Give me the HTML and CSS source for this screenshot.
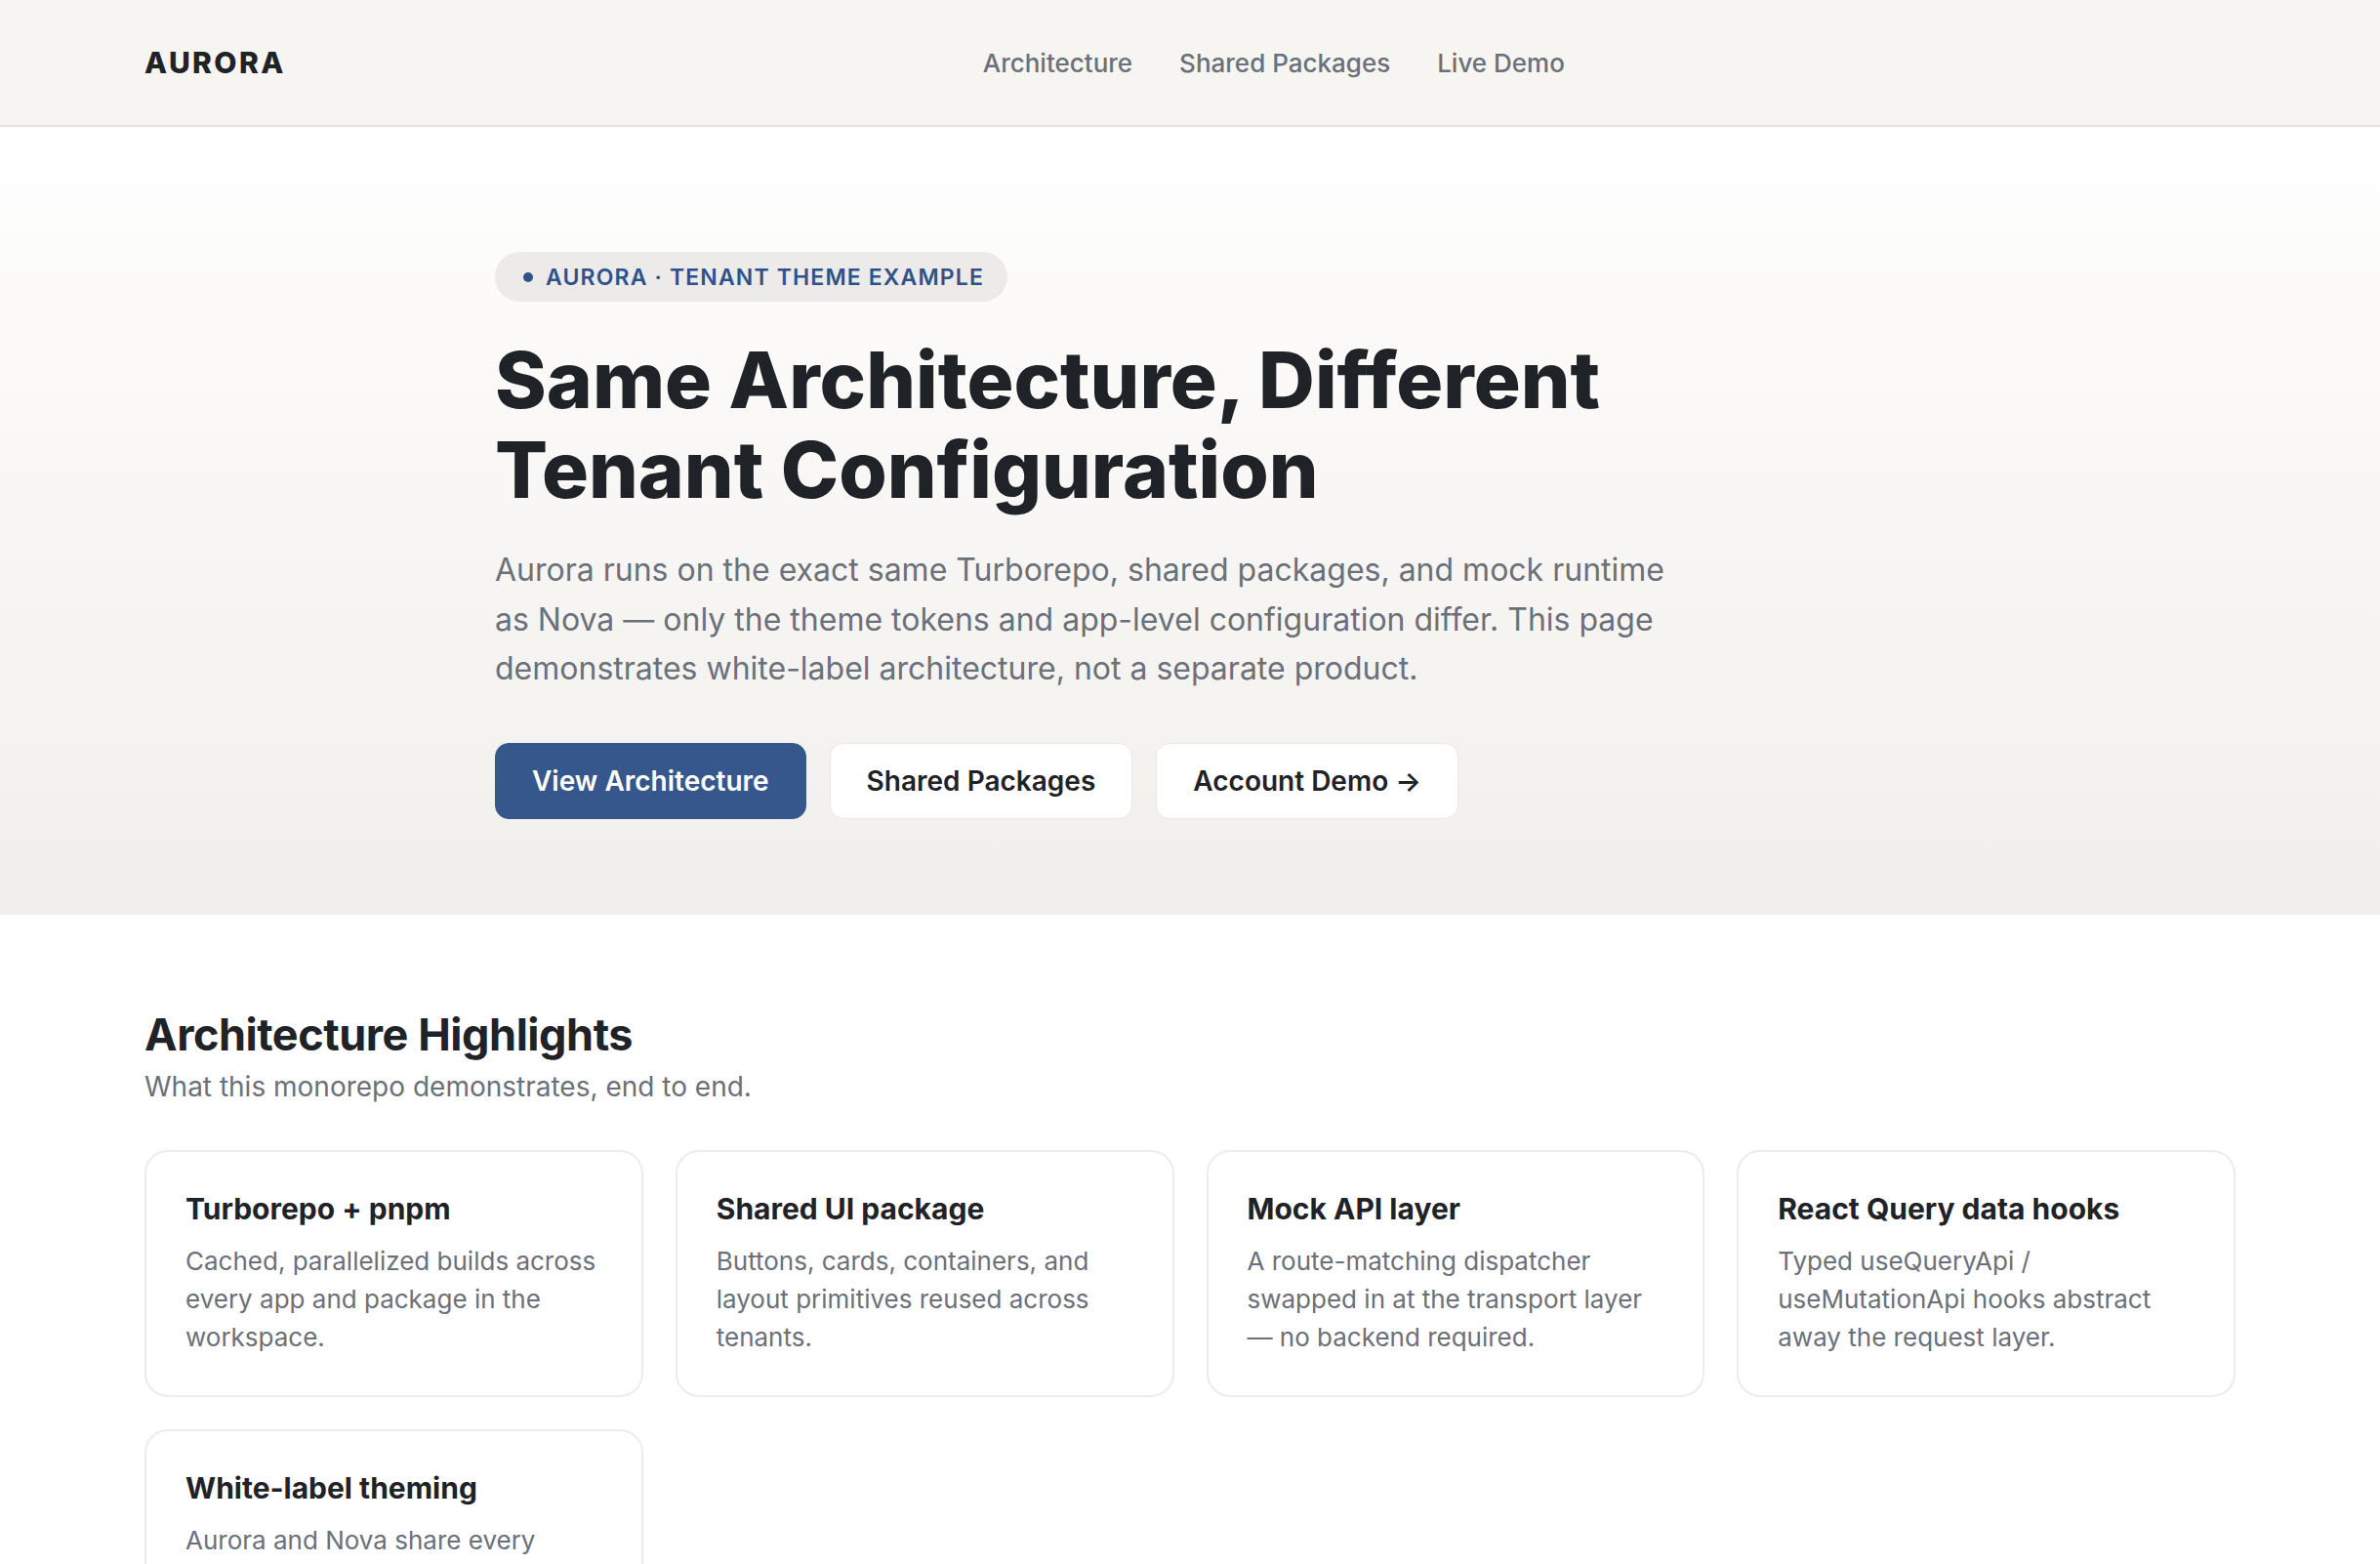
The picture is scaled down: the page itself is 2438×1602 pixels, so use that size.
FILE: index.html
```html
<!DOCTYPE html>
<html lang="en">
<head>
<meta charset="utf-8">
<title>Aurora — Tenant Theme Example</title>
<link rel="stylesheet" href="styles.css">
</head>
<body>
<header class="topbar">
  <div class="container topbar-inner">
    <a class="logo" href="#">AURORA</a>
    <nav class="nav">
      <a href="#">Architecture</a>
      <a href="#">Shared Packages</a>
      <a href="#">Live Demo</a>
    </nav>
  </div>
</header>

<section class="hero">
  <div class="hero-inner">
    <div class="badge"><span class="dot"></span>Aurora · Tenant Theme Example</div>
    <h1 class="hero-title">Same Architecture, Different Tenant Configuration</h1>
    <p class="hero-text">Aurora runs on the exact same Turborepo, shared packages, and mock runtime as Nova — only the theme tokens and app-level configuration differ. This page demonstrates white-label architecture, not a separate product.</p>
    <div class="actions">
      <a class="btn btn-primary" href="#">View Architecture</a>
      <a class="btn btn-secondary" href="#">Shared Packages</a>
      <a class="btn btn-secondary" href="#">Account Demo →</a>
    </div>
  </div>
</section>

<section class="highlights">
  <div class="container">
    <h2 class="section-title">Architecture Highlights</h2>
    <p class="section-sub">What this monorepo demonstrates, end to end.</p>
    <div class="cards">
      <div class="card">
        <h3 class="card-title">Turborepo + pnpm</h3>
        <p class="card-text">Cached, parallelized builds across every app and package in the workspace.</p>
      </div>
      <div class="card">
        <h3 class="card-title">Shared UI package</h3>
        <p class="card-text">Buttons, cards, containers, and layout primitives reused across tenants.</p>
      </div>
      <div class="card">
        <h3 class="card-title">Mock API layer</h3>
        <p class="card-text">A route-matching dispatcher swapped in at the transport layer — no backend required.</p>
      </div>
      <div class="card">
        <h3 class="card-title">React Query data hooks</h3>
        <p class="card-text">Typed useQueryApi / useMutationApi hooks abstract away the request layer.</p>
      </div>
      <div class="card">
        <h3 class="card-title">White-label theming</h3>
        <p class="card-text">Aurora and Nova share every component; only the theme tokens and app configuration change.</p>
      </div>
    </div>
  </div>
</section>
</body>
</html>
```

FILE: styles.css
```css
* { box-sizing: border-box; }

html, body {
  margin: 0;
  padding: 0;
}

body {
  font-family: Inter, "Noto Sans", "Liberation Sans", sans-serif;
  color: #1f2328;
  background: #ffffff;
}

a { text-decoration: none; color: inherit; }

.container {
  max-width: 2438px;
  padding: 0 148px;
  margin: 0 auto;
}

.topbar {
  background: #f6f5f2;
  border-bottom: 2px solid #e3e1dd;
}

.topbar-inner {
  height: 128px;
  display: flex;
  align-items: center;
}

.logo {
  font-size: 30px;
  font-weight: 800;
  letter-spacing: 0.08em;
  color: #1f2328;
}

.nav {
  margin-left: 714px;
  display: flex;
  gap: 48px;
}

.nav a {
  font-size: 26px;
  font-weight: 500;
  color: #6b7079;
}

.hero {
  background: linear-gradient(180deg, #ffffff 0%, #f9f8f6 40%, #f1efec 100%);
  padding: 128px 0 98px;
}

.hero-inner {
  max-width: 1424px;
  margin: 0 auto;
}

.badge {
  display: inline-flex;
  align-items: center;
  gap: 13px;
  height: 51px;
  padding: 0 24px 0 29px;
  border-radius: 999px;
  background: #ecebe9;
  color: #2f528a;
  font-size: 23px;
  font-weight: 600;
  text-transform: uppercase;
  letter-spacing: 0.05em;
}

.dot {
  width: 10px;
  height: 10px;
  border-radius: 50%;
  background: #2f528a;
}

.hero-title {
  margin: 34px 0 0;
  font-size: 80px;
  line-height: 92px;
  font-weight: 800;
  letter-spacing: 0;
  color: #1f2328;
  max-width: 1250px;
}

.hero-text {
  margin: 32px 0 0;
  max-width: 1240px;
  font-size: 32px;
  line-height: 50.5px;
  color: #6b7079;
}

.actions {
  margin-top: 50px;
  display: flex;
  gap: 24px;
}

.btn {
  display: inline-flex;
  align-items: center;
  height: 78px;
  padding: 0 37px;
  border-radius: 14px;
  font-size: 28px;
  font-weight: 600;
}

.btn-primary {
  background: #36578c;
  color: #ffffff;
  border: 1px solid #36578c;
}

.btn-secondary {
  background: #ffffff;
  color: #1f2328;
  border: 1px solid #ebe8e4;
}

.highlights {
  padding: 96px 0 60px;
}

.section-title {
  margin: 0;
  font-size: 45px;
  line-height: 54px;
  font-weight: 700;
  letter-spacing: -0.01em;
  color: #1f2328;
}

.section-sub {
  margin: 6px 0 0;
  font-size: 28px;
  line-height: 40px;
  color: #6b7079;
}

.cards {
  margin-top: 45px;
  display: grid;
  grid-template-columns: repeat(4, 1fr);
  gap: 33px;
}

.card {
  background: #ffffff;
  border: 2px solid #eeece9;
  border-radius: 24px;
  padding: 39px 40px 40px 40px;
}

.card-title {
  margin: 0;
  font-size: 30px;
  line-height: 38px;
  font-weight: 650;
  color: #1f2328;
}

.card-text {
  margin: 15px 0 0;
  font-size: 26px;
  line-height: 39px;
  color: #6b7079;
}
```
